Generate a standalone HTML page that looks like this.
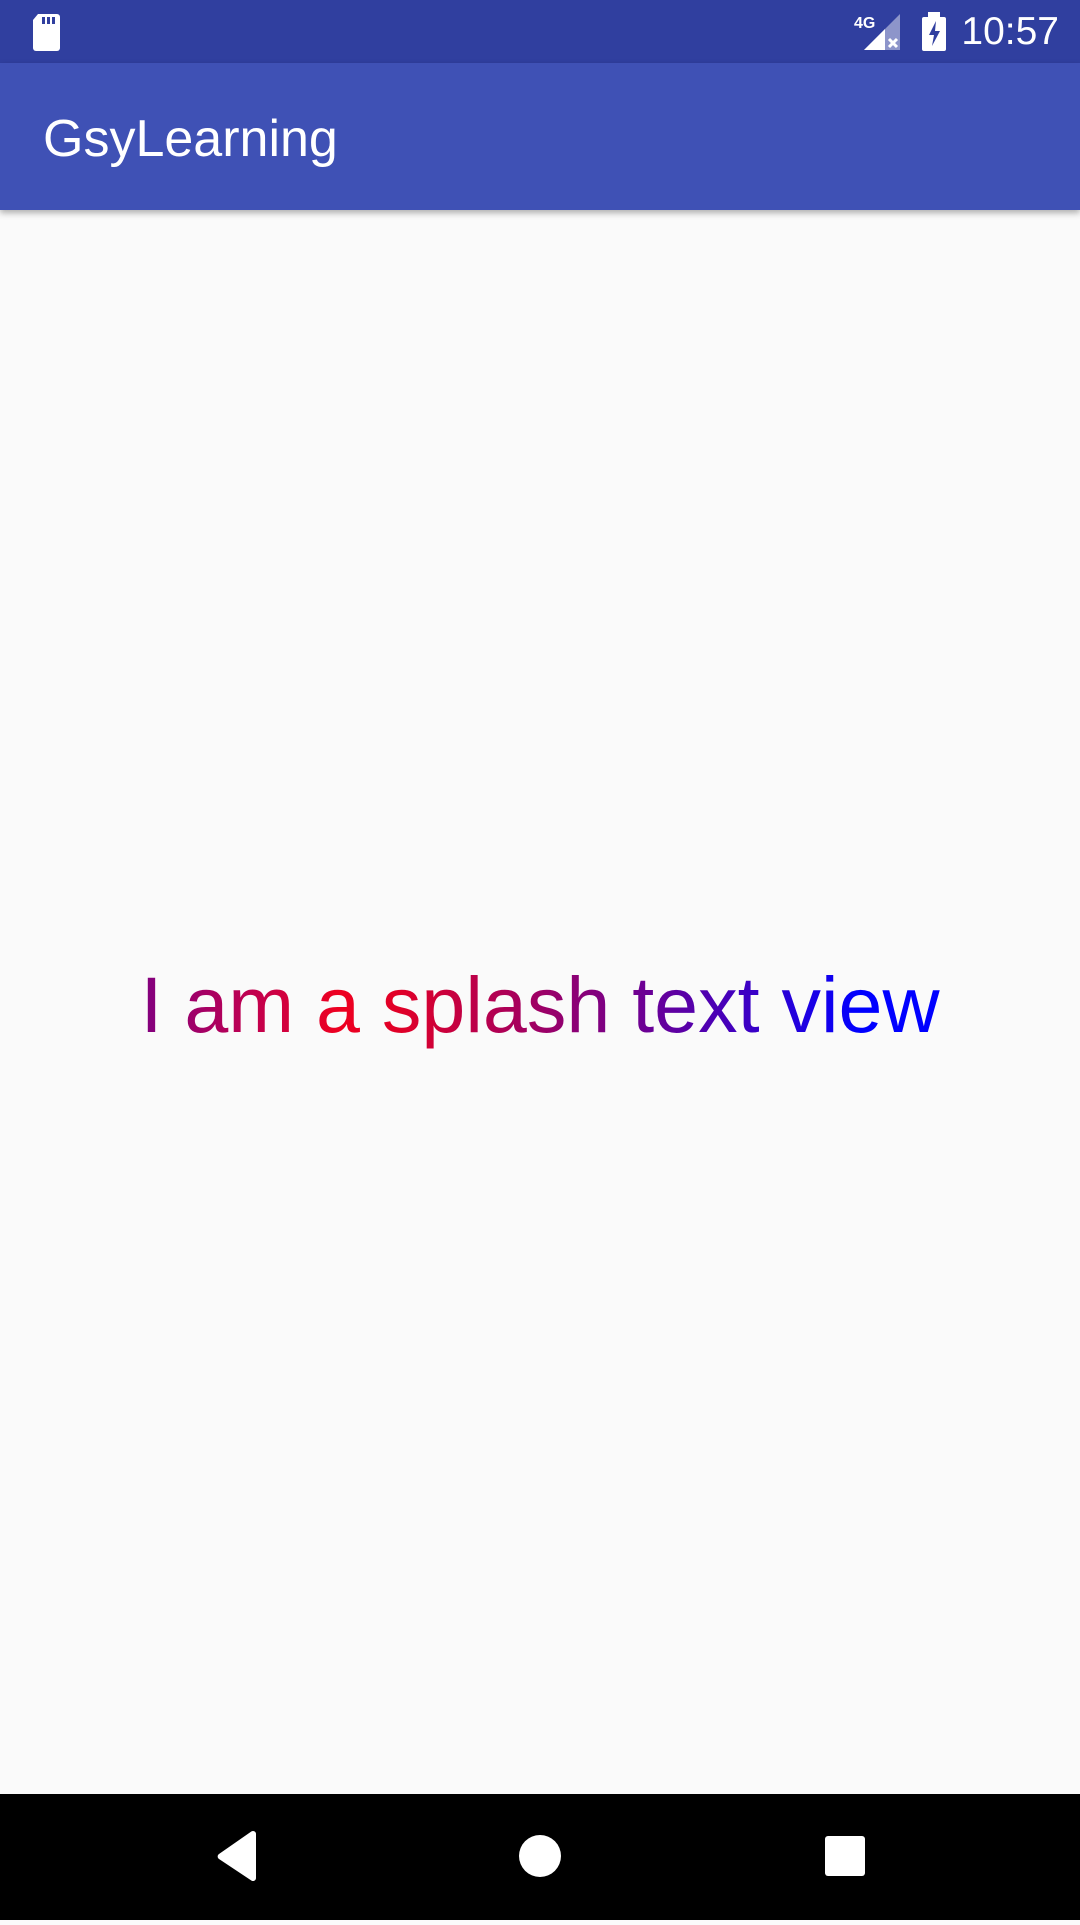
<!DOCTYPE html>
<html><head><meta charset="utf-8"><style>
html,body{margin:0;padding:0;}
body{width:1080px;height:1920px;position:relative;background:#fafafa;font-family:"Liberation Sans",sans-serif;overflow:hidden;}
.status{position:absolute;left:0;top:0;width:1080px;height:63px;background:#303f9f;}
.appbar{position:absolute;left:0;top:63px;width:1080px;height:147px;background:#3f51b5;box-shadow:0 3px 6px rgba(0,0,0,0.3);}
.title{position:absolute;left:43px;top:46px;color:#fff;font-size:52px;line-height:60px;}
.time{position:absolute;right:21px;top:10px;color:#fff;font-size:39px;line-height:44px;}
.splash{position:absolute;left:0;width:1080px;top:955px;text-align:center;font-size:79px;line-height:100px;}
.splash span{display:inline-block;background:linear-gradient(90deg,#800080 0px,#c00050 110px,#ee0020 200px,#e00028 260px,#800080 460px,#4000c0 600px,#0000ff 720px);-webkit-background-clip:text;background-clip:text;color:transparent;}
.nav{position:absolute;left:0;top:1794px;width:1080px;height:126px;background:#000;}
</style></head><body>
<div class="status">
<svg width="1080" height="63" style="position:absolute;left:0;top:0">
<path d="M38 14h19a3 3 0 0 1 3 3v31a3 3 0 0 1-3 3H36a3 3 0 0 1-3-3V20z" fill="#fff"/>
<rect x="42" y="17" width="3" height="7" fill="#303f9f"/><rect x="47" y="17" width="3" height="7" fill="#303f9f"/><rect x="52" y="17" width="3" height="7" fill="#303f9f"/>
<text x="854" y="28" fill="#fff" font-size="16" font-weight="bold" font-family="Liberation Sans">4G</text>
<path d="M864 50L900 14V50z" fill="#fff" opacity="0.45"/>
<path d="M864 50L885 29V50z" fill="#fff"/>
<path d="M889 39l8 8M897 39l-8 8" stroke="#fff" stroke-width="3"/>
<rect x="922" y="17" width="24" height="34" rx="2" fill="#fff"/><rect x="928" y="12" width="12" height="6" fill="#fff"/>
<path d="M936 21l-7 14h5l-2 11 8-15h-5z" fill="#303f9f"/>
</svg>
<div class="time">10:57</div>
</div>
<div class="appbar"><div class="title">GsyLearning</div></div>
<div class="splash"><span>I am a splash text view</span></div>
<div class="nav">
<svg width="1080" height="126">
<path d="M256 40v44a3 3 0 0 1-4.5 2.6L219 65a3 3 0 0 1 0-5l32.5-22.6A3 3 0 0 1 256 40z" fill="#fff"/>
<circle cx="540" cy="62" r="21" fill="#fff"/>
<rect x="825" y="42" width="40" height="40" rx="3" fill="#fff"/>
</svg>
</div>
</body></html>
